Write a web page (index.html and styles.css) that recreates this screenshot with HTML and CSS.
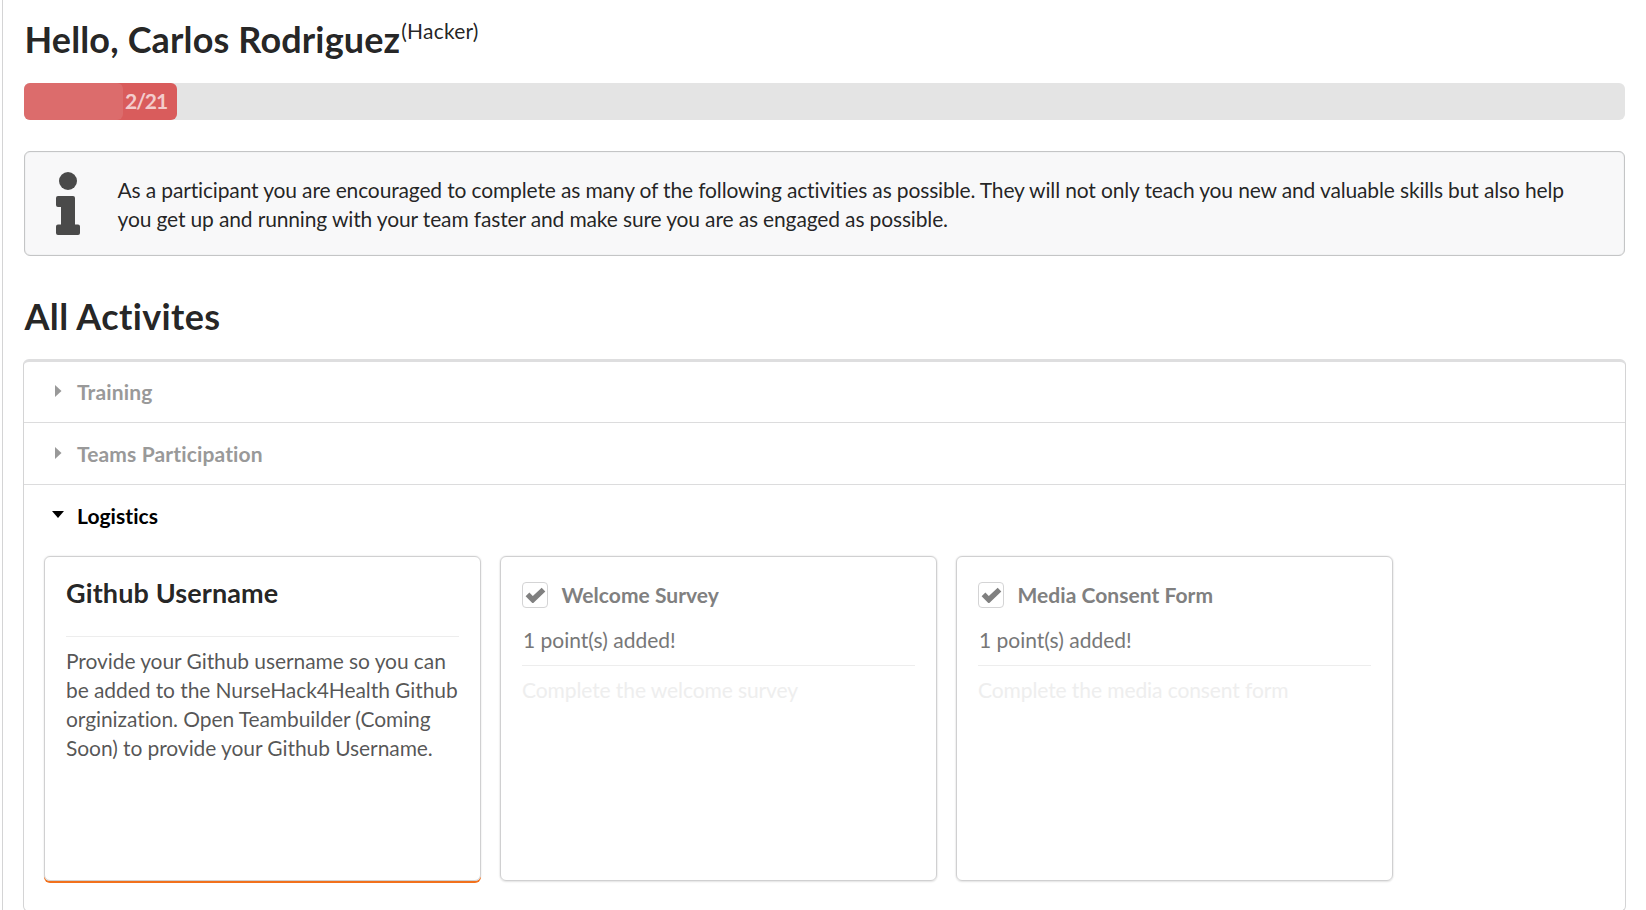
FILE: index.html
```html
<!DOCTYPE html>
<html lang="en">
<head>
<meta charset="utf-8">
<title>Activities</title>
<link rel="stylesheet" href="styles.css">
</head>
<body>
<main class="page">
  <h1 class="heading">Hello, Carlos Rodriguez<sup class="role">(Hacker)</sup></h1>
  <div class="progress"><div class="bar"><div class="pulse"></div><span class="progress-text">2/21</span></div></div>
  <section class="message">
    <svg class="info-icon" viewBox="0 0 24 63"><circle cx="12" cy="9" r="9"/><path d="M2 24H17a2 2 0 0 1 2 2V52.500H22a2 2 0 0 1 2 2V61a2 2 0 0 1-2 2H2a2 2 0 0 1-2-2V54.500a2 2 0 0 1 2-2H5V35H2a2 2 0 0 1-2-2V26a2 2 0 0 1 2-2Z"/></svg>
    <p class="message-text">As a participant you are encouraged to complete as many of the following activities as possible. They will not only teach you new and valuable skills but also help you get up and running with your team faster and make sure you are as engaged as possible.</p>
  </section>
  <h1 class="heading second">All Activites</h1>
  <section class="accordion">
    <div class="title"><svg class="caret" viewBox="0 0 12 12"><path d="M3 0L9.500 6L3 12Z"/></svg>Training</div>
    <div class="title"><svg class="caret" viewBox="0 0 12 12"><path d="M3 0L9.500 6L3 12Z"/></svg>Teams Participation</div>
    <div class="title active"><svg class="caret" viewBox="0 0 12 12"><path d="M0 2H12L6 9Z"/></svg>Logistics</div>
    <div class="cards">
      <article class="card todo">
        <h2 class="card-title">Github Username</h2>
        <p class="description">Provide your Github username so you can be added to the NurseHack4Health Github orginization. Open Teambuilder (Coming Soon) to provide your Github Username.</p>
      </article>
      <article class="card">
        <div class="check-row"><span class="checkbox"><svg class="check" viewBox="0 0 19 15"><path d="M2 7L7 12L17 2.500"/></svg></span><span class="label">Welcome Survey</span></div>
        <p class="points">1 point(s) added!</p>
        <p class="description faded">Complete the welcome survey</p>
      </article>
      <article class="card">
        <div class="check-row"><span class="checkbox"><svg class="check" viewBox="0 0 19 15"><path d="M2 7L7 12L17 2.500"/></svg></span><span class="label">Media Consent Form</span></div>
        <p class="points">1 point(s) added!</p>
        <p class="description faded">Complete the media consent form</p>
      </article>
    </div>
  </section>
</main>
</body>
</html>
```
FILE: styles.css
```css
* { box-sizing: border-box; }
body { margin: 0; height: 910px; overflow: hidden; background: #fff; font-family: Lato, sans-serif; font-size: 21px; line-height: 29px; color: rgba(0,0,0,.87); font-variant-ligatures: none; }
p, h1, h2 { margin: 0; }
.page { margin-left: 2px; border-left: 1px solid #d4d4d5; height: 910px; padding: 17px 21px 0; }
.heading { height: 45px; font-size: 36px; line-height: 45px; font-weight: 700; letter-spacing: .14px; padding-left: .5px; white-space: nowrap; }
.role { font-size: 21px; font-weight: 400; line-height: 0; vertical-align: 14px; letter-spacing: .2px; margin-left: 1px; }
.progress { height: 37px; margin-top: 21px; background: #e4e4e4; border-radius: 6px; }
.bar { position: relative; width: 153px; height: 37px; border-radius: 6px; background: #d95c5c; text-align: right; padding-right: 10px; }
.pulse { position: absolute; left: 0; top: 0; width: 99px; height: 37px; border-radius: 6px; background: rgba(255,255,255,.1); }
.progress-text { display: block; line-height: 35px; font-weight: 700; letter-spacing: -1.1px; color: rgba(255,255,255,.7); }
.message { display: flex; align-items: center; height: 105px; margin-top: 31px; padding: 0 31px; border: 1px solid #c4c5c6; border-radius: 6px; background: #f8f8f9; box-shadow: inset 0 0 1px #c4c5c6; }
.info-icon { flex: none; width: 24px; height: 63px; margin-right: 37.5px; fill: #4a4a4a; }
.message-text { letter-spacing: -.145px; }
.second { margin-top: 38px; letter-spacing: .36px; }
.accordion { margin: 20px -1px 0; height: 553px; border: 1px solid #d4d4d5; border-top: 3px solid #dededf; border-radius: 6px; }
.title { display: flex; align-items: center; height: 62px; padding: 0 0 0 28px; font-weight: 700; letter-spacing: .14px; color: #999; border-top: 1px solid #dcdcdd; }
.title:first-child { height: 60px; padding-bottom: 1px; border-top: 0; }
.title.active { color: #000; letter-spacing: .06px; }
.caret { width: 12px; height: 12px; margin: 0 13px 2px 0; fill: currentColor; }
.cards { display: flex; gap: 19px; padding: 10px 20px; }
.card { width: 437px; height: 325px; padding: 20px 21px; border: 1px solid #d0d0d1; border-radius: 6px; box-shadow: 0 0 2px #dedede, 0 1px 2px #e8e8e8; }
.todo { box-shadow: 0 2px 0 #f2711c, 0 0 2px #dedede; }
.card-title { font-size: 27px; line-height: 32px; letter-spacing: .12px; margin-bottom: 27px; }
.description { border-top: 1px solid #ededed; padding-top: 9px; letter-spacing: -.08px; color: rgba(0,0,0,.68); }
.check-row { display: flex; align-items: center; height: 36px; }
.checkbox { display: flex; align-items: center; justify-content: center; width: 26px; height: 26px; border: 1px solid #d4d4d5; border-radius: 4px; margin-right: 13.5px; }
.check { width: 21px; height: 16px; flex: none; fill: none; stroke: #808080; stroke-width: 5; }
.label { font-weight: 700; margin-top: -1px; color: #808080; letter-spacing: .04px; }
.points { margin: 12px 0 11px; padding-left: 1px; color: #777; }
.faded { color: #eee; letter-spacing: -.09px; }
```
